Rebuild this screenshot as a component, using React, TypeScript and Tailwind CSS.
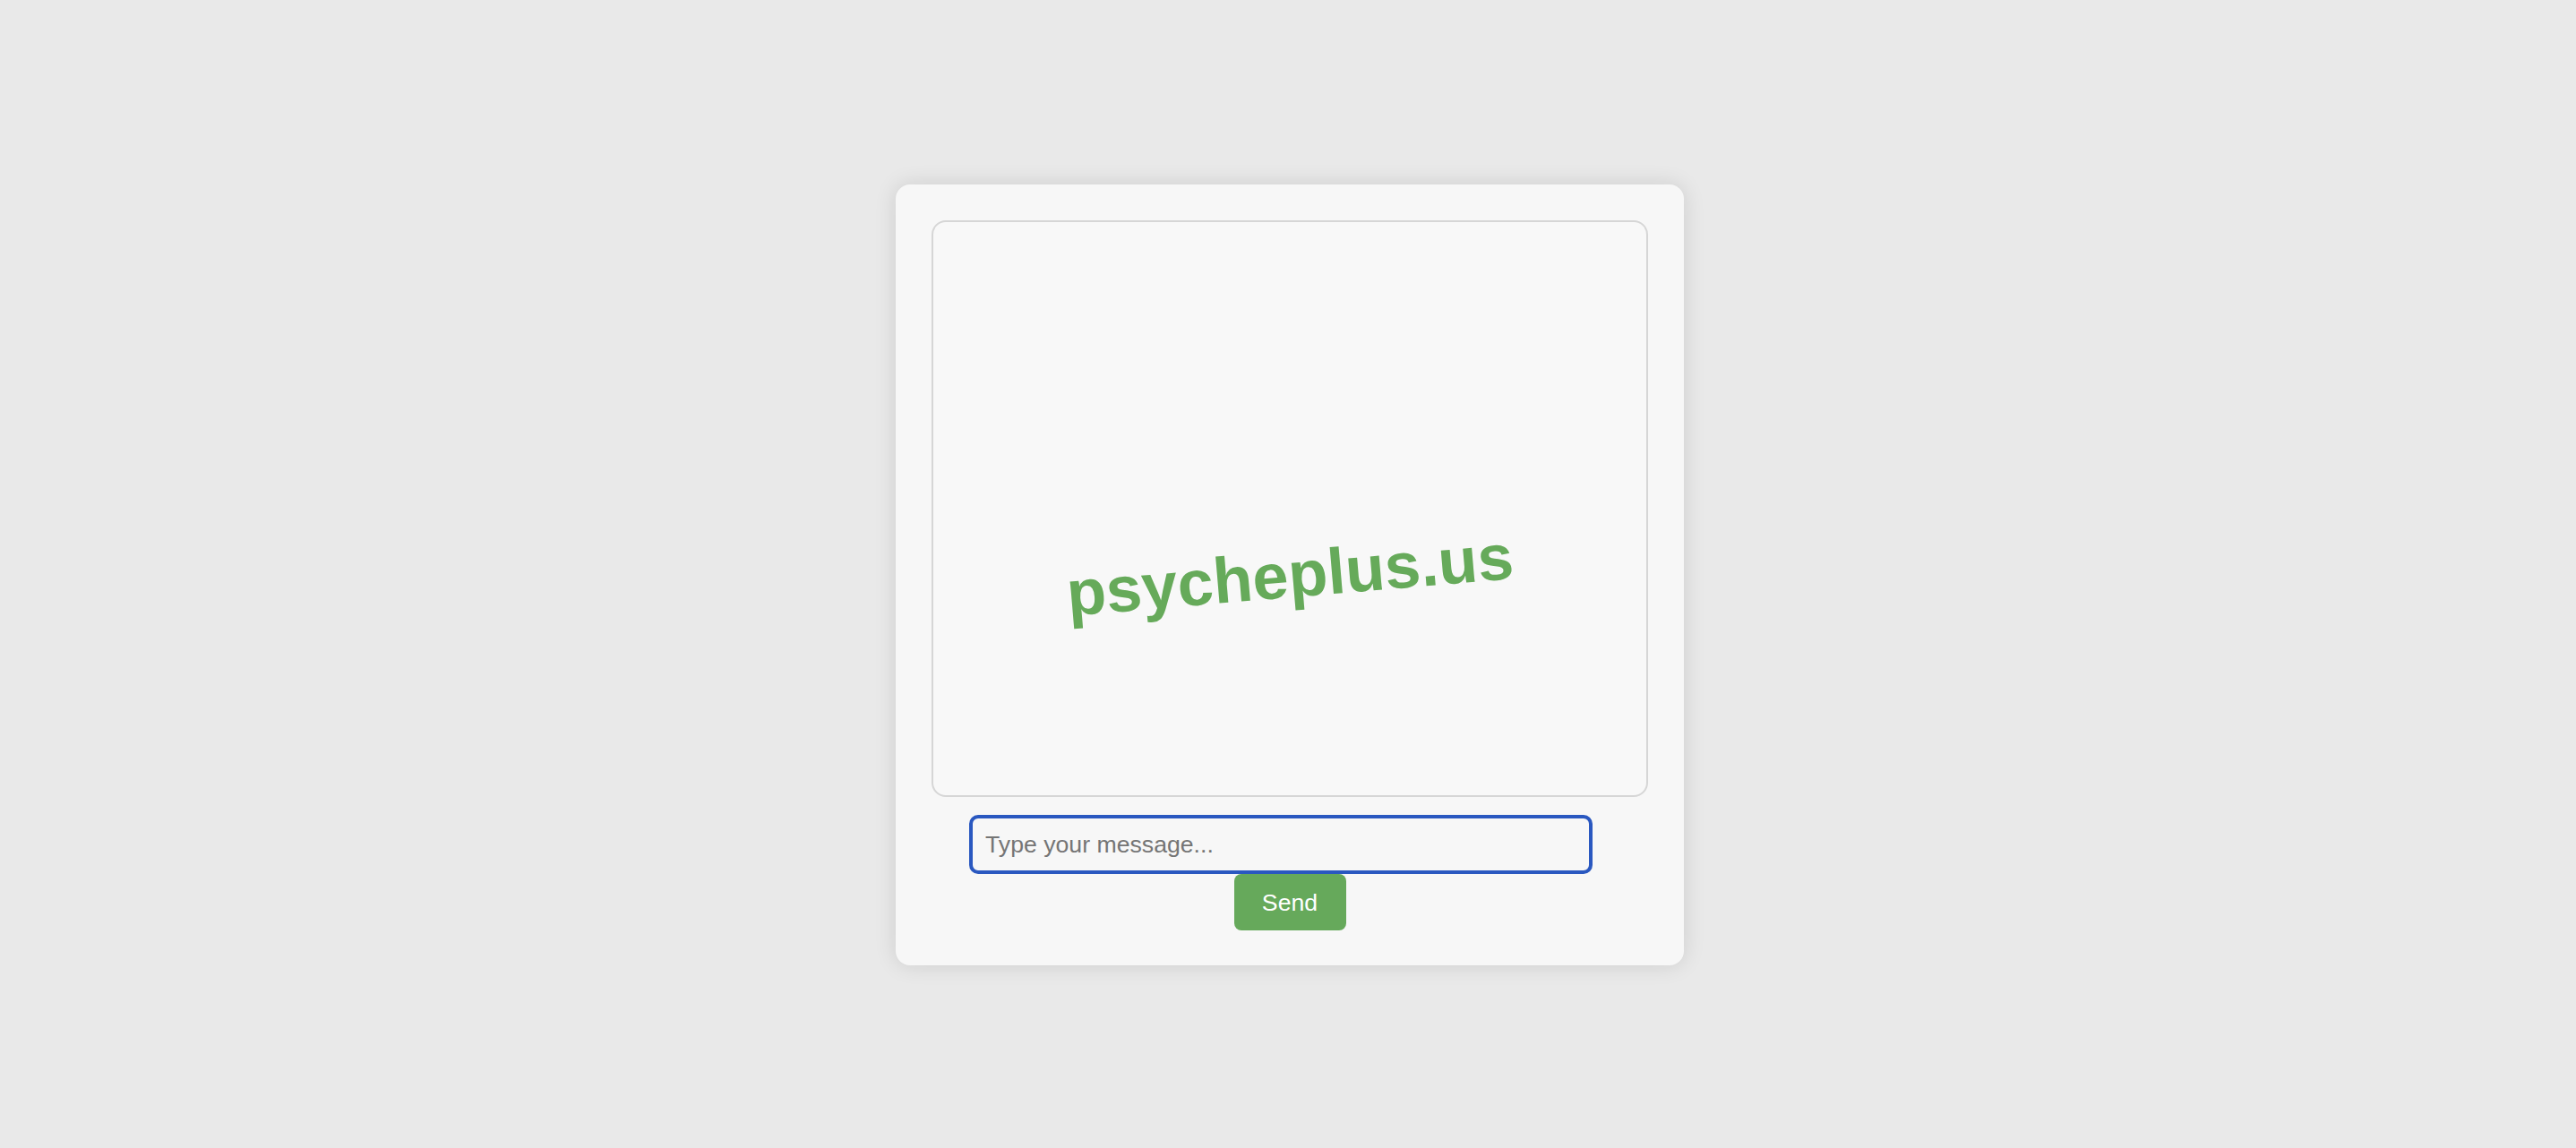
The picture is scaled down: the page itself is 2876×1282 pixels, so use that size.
import { useState } from 'react'

export default function App() {
  const [msg, setMsg] = useState('')

  return (
    <div
      className="min-h-screen w-full bg-[#e9e9e9] pt-[206px]"
      style={{ fontFamily: '"Liberation Sans", Arial, sans-serif' }}
    >
      {/* ── Chat card ─────────────────────────────────────── */}
      <div className="relative ml-[1000px] w-[880px] rounded-[16px] bg-[#f7f7f7] px-[40px] pt-[40px] pb-[39px] shadow-[0_0_24px_rgba(0,0,0,0.12)]">
        {/* Messages area */}
        <div className="h-[644px] w-[800px] rounded-[16px] border-2 border-[#d6d6d6] bg-[#f8f8f8]" />

        {/* Input */}
        <div className="mt-[20px] ml-[42px] w-[696px]">
          <input
            value={msg}
            onChange={e => setMsg(e.target.value)}
            placeholder="Type your message..."
            className="block h-[66px] w-full rounded-[10px] border-[4px] border-[#2a58c0] bg-[#f7f7f7] px-[14px] text-[26.67px] text-[#333] outline-none placeholder:text-[#757575]"
          />
        </div>

        {/* Send */}
        <div className="flex justify-center">
          <button className="h-[63px] w-[125px] rounded-[8px] bg-[#66a95b] text-[26.67px] text-white">
            Send
          </button>
        </div>

        {/* Watermark */}
        <div className="pointer-events-none absolute left-1/2 top-1/2 -translate-x-1/2 -translate-y-1/2 rotate-[-4.8deg] whitespace-nowrap text-[72px] font-bold leading-none text-[#66aa5a]">
          psycheplus.us
        </div>
      </div>
    </div>
  )
}
